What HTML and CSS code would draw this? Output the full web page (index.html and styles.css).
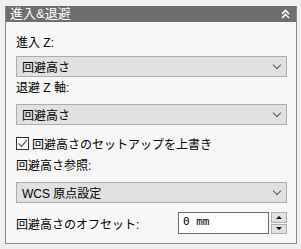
FILE: index.html
```html
<!DOCTYPE html>
<html lang="ja">
<head>
  <meta charset="UTF-8">
  <title>進入&amp;退避</title>
  <link rel="stylesheet" href="styles.css">
</head>
<body>
  <div class="panel">
    <div class="panel-header">
      <span>進入&amp;退避</span>
      <svg class="collapse" width="9" height="10" viewBox="0 0 9 10">
        <path d="M1 5 L4.5 1.5 L8 5 M1 9 L4.5 5.5 L8 9" fill="none" stroke="#fff" stroke-width="1.6"/>
      </svg>
    </div>
    <div class="panel-body">
      <div class="label">進入 Z:</div>
      <div class="select"><span>回避高さ</span><span class="arrow"></span></div>

      <div class="label gap">退避 Z 軸:</div>
      <div class="select"><span>回避高さ</span><span class="arrow"></span></div>

      <div class="check-row">
        <span class="checkbox">
          <svg width="11" height="11" viewBox="0 0 11 11"><path d="M1.5 5.5 L4.5 8.5 L10 2" fill="none" stroke="#666" stroke-width="1.3"/></svg>
        </span>
        <span>回避高さのセットアップを上書き</span>
      </div>

      <div class="label ref">回避高さ参照:</div>
      <div class="select"><span>WCS 原点設定</span><span class="arrow"></span></div>

      <div class="offset-row">
        <span>回避高さのオフセット:</span>
        <div class="spin">
          <div class="spin-input">0 mm</div>
          <div class="spin-buttons">
            <div class="spin-btn"><span class="tri-up"></span></div>
            <div class="spin-btn"><span class="tri-down"></span></div>
          </div>
        </div>
      </div>
    </div>
  </div>
</body>
</html>
```

FILE: styles.css
```css
body {
  margin: 0;
  background-color: #f0f0f0;
  font-family: "Liberation Sans", "Noto Sans CJK JP", sans-serif;
  font-size: 12px;
  color: #000;
}
.panel {
  margin: 6px 4px 0 5px;
  width: 290px;
  height: 237px;
  border: 1px solid #8a8a8a;
  border-top: none;
  background-color: #f7f7f7;
}
.panel-header {
  height: 16px;
  background-color: #6e6e6e;
  color: #fff;
  font-size: 13px;
  line-height: 16px;
  padding: 0 6px 0 4px;
  display: flex;
  justify-content: space-between;
  align-items: center;
}
.panel-body {
  padding: 13px 9px 0 10px;
}
.label {
  height: 16px;
  line-height: 16px;
  margin-bottom: 5px;
}
.label.gap {
  margin-top: 3px;
  margin-bottom: 8px;
}
.label.ref {
  margin-top: 7px;
  margin-bottom: 8px;
}
.select {
  height: 19px;
  border: 1px solid #adadad;
  background-color: #e1e1e1;
  display: flex;
  align-items: center;
  justify-content: space-between;
  padding: 0 6px 0 5px;
}
.arrow {
  width: 5px;
  height: 5px;
  border-right: 1px solid #555;
  border-bottom: 1px solid #555;
  transform: rotate(45deg);
  margin-top: -3px;
}
.check-row {
  margin-top: 10px;
  height: 16px;
  display: flex;
  align-items: center;
  gap: 3px;
}
.checkbox {
  width: 11px;
  height: 11px;
  border: 1px solid #333;
  background-color: #fff;
  display: flex;
}
.offset-row {
  margin-top: 9px;
  display: flex;
  align-items: center;
  justify-content: space-between;
}
.spin {
  display: flex;
  gap: 2px;
}
.spin-input {
  width: 85px;
  height: 20px;
  border: 1px solid #6b6b6b;
  background-color: #fff;
  padding-left: 4px;
  line-height: 17px;
  font-family: "DejaVu Sans Mono", monospace;
  font-size: 11px;
}
.spin-buttons {
  width: 16px;
  display: flex;
  flex-direction: column;
  gap: 1px;
}
.spin-btn {
  flex: 1;
  border: 1px solid #adadad;
  background-color: #e1e1e1;
  display: flex;
  align-items: center;
  justify-content: center;
}
.tri-up {
  border-left: 3px solid transparent;
  border-right: 3px solid transparent;
  border-bottom: 3px solid #000;
}
.tri-down {
  border-left: 3px solid transparent;
  border-right: 3px solid transparent;
  border-top: 3px solid #000;
}
```
